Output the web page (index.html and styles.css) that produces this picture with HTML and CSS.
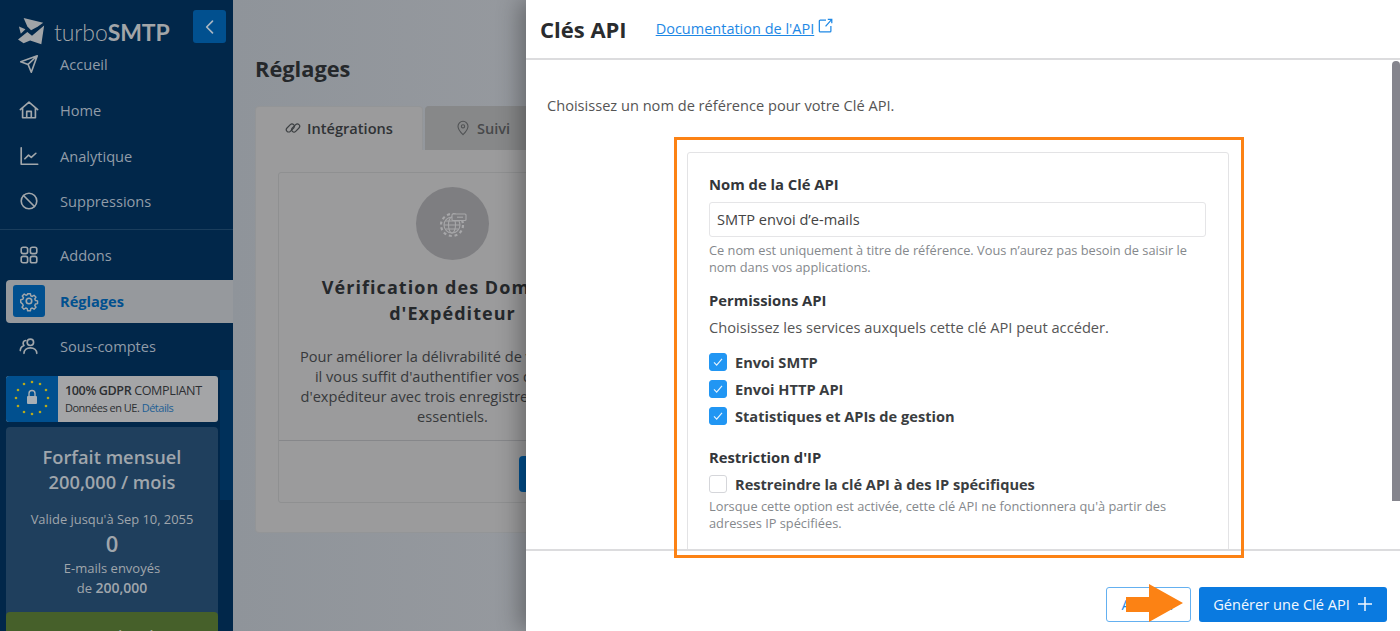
FILE: index.html
```html
<!DOCTYPE html>
<html lang="fr">
<head>
<meta charset="utf-8">
<title>Clés API</title>
<link rel="stylesheet" href="styles.css">
</head>
<body>
<div class="app">
  <aside class="sidebar">
    <div class="brand">
      <svg class="logo-mark" viewBox="0 0 30 30"><path d="M6 0l21 5-6 4.500-7 3.500-4-4z" fill="#a2a5a8"/><path d="M0 23l10-8 5 4 13-11-3 20-12-4-7 3z" fill="#a2a5a8"/><path d="M1 9l7 3-5 5z" fill="#a2a5a8"/></svg>
      <span class="logo-text">turbo<b>SMTP</b></span>
      <button class="collapse"><svg viewBox="0 0 24 24" width="20" height="20"><path d="M15 5l-7 7 7 7" fill="none" stroke="#a9b6c2" stroke-width="2" stroke-linecap="round" stroke-linejoin="round"/></svg></button>
    </div>
    <nav class="nav">
      <a class="nav-item first"><svg class="ico" viewBox="0 0 24 24"><path d="M3 9.500L21 3l-6.500 18-3.500-8.500L3 9.500zM11 12.500L21 3"/></svg>Accueil</a>
      <a class="nav-item"><svg class="ico" viewBox="0 0 24 24"><path d="M2.500 11.500L12 3.500l9.500 8M5 10v10.500h14V10M9.500 20.500v-7h5v7"/></svg>Home</a>
      <a class="nav-item"><svg class="ico" viewBox="0 0 24 24"><path d="M3.500 3v18h18M7.500 15l4-4 3 2.500 5-4.500"/></svg>Analytique</a>
      <a class="nav-item"><svg class="ico" viewBox="0 0 24 24"><circle cx="12" cy="12" r="8.500"/><path d="M6 6l12 12"/></svg>Suppressions</a>
      <div class="nav-divider"></div>
      <a class="nav-item"><svg class="ico" viewBox="0 0 24 24"><rect x="3.500" y="3.500" width="7" height="7" rx="2"/><rect x="13.500" y="3.500" width="7" height="7" rx="2"/><rect x="3.500" y="13.500" width="7" height="7" rx="2"/><rect x="13.500" y="13.500" width="7" height="7" rx="2"/></svg>Addons</a>
      <a class="nav-item active"><span class="tile"><svg class="ico" viewBox="0 0 24 24"><circle cx="12" cy="12" r="3"/><path d="M10.300 3h3.400l.5 2.600 1.800.8 2.200-1.500 2.400 2.400-1.500 2.200.8 1.800 2.600.5v3.400l-2.600.5-.8 1.800 1.500 2.200-2.400 2.400-2.200-1.500-1.800.8-.5 2.600h-3.400l-.5-2.600-1.800-.8-2.200 1.500-2.400-2.400 1.500-2.200-.8-1.800L1.800 13.700v-3.400l2.600-.5.800-1.800-1.500-2.200 2.400-2.400 2.200 1.500 1.800-.8z" transform="translate(1.400 1.400) scale(.885)"/></svg></span>Réglages</a>
      <a class="nav-item"><svg class="ico" viewBox="0 0 24 24"><circle cx="13.500" cy="8" r="3.500"/><path d="M6.500 20c0-3.500 3-6 7-6s7 2.500 7 6M8.500 6C6 6 4.500 9 6.500 11.500 4 12.500 2.500 14.500 2.500 17"/></svg>Sous-comptes</a>
    </nav>
    <div class="gdpr">
      <div class="gdpr-flag">
        <svg viewBox="0 0 52 46" width="52" height="46">
          <g fill="#b7a91c"><circle cx="26" cy="6" r="1.300"/><circle cx="34" cy="8" r="1.300"/><circle cx="40" cy="14" r="1.300"/><circle cx="42" cy="22" r="1.300"/><circle cx="40" cy="30" r="1.300"/><circle cx="34" cy="36" r="1.300"/><circle cx="26" cy="38" r="1.300"/><circle cx="18" cy="36" r="1.300"/><circle cx="12" cy="30" r="1.300"/><circle cx="10" cy="22" r="1.300"/><circle cx="12" cy="14" r="1.300"/><circle cx="18" cy="8" r="1.300"/></g>
          <rect x="21" y="20" width="10" height="8" rx="1" fill="#a9b0b6"/><path d="M23 20v-2.500a3 3 0 0 1 6 0V20" fill="none" stroke="#a9b0b6" stroke-width="1.400"/>
        </svg>
      </div>
      <div class="gdpr-text">
        <div class="gdpr-title"><strong>100% GDPR</strong> COMPLIANT</div>
        <div class="gdpr-sub">Données en UE. <span>Détails</span></div>
      </div>
    </div>
    <section class="plan">
      <div class="plan-name">Forfait mensuel</div>
      <div class="plan-name">200,000 / mois</div>
      <div class="plan-valid">Valide jusqu'à Sep 10, 2055</div>
      <div class="plan-count">0</div>
      <div class="plan-line">E-mails envoyés</div>
      <div class="plan-line">de <b>200,000</b></div>
      <div class="plan-cta">Comparer les plans</div>
    </section>
    <div class="side-thumb"></div>
  </aside>

  <main class="main">
    <h1 class="page-title">Réglages</h1>
    <div class="tabs">
      <div class="tab active"><svg class="tab-ico" viewBox="0 0 24 24"><rect x="1" y="8.500" width="14" height="7" rx="3.500" transform="rotate(-45 8 12)"/><rect x="9" y="8.500" width="14" height="7" rx="3.500" transform="rotate(-45 16 12)"/></svg>Intégrations</div>
      <div class="tab"><svg class="tab-ico" viewBox="0 0 24 24"><path d="M12 22s7.500-7 7.500-12.500a7.500 7.500 0 0 0-15 0C4.500 15 12 22 12 22z"/><circle cx="12" cy="9.500" r="2.500"/></svg>Suivi</div>
    </div>
    <div class="panel">
      <div class="feature">
        <div class="feature-body">
          <div class="feature-circle"><svg viewBox="0 0 32 32" width="32" height="32" fill="none" stroke="#a7a7a9" stroke-width="1.100"><circle cx="15" cy="17" r="11" stroke-width="2.200" stroke-dasharray="3 2.800"/><circle cx="15" cy="17" r="8"/><ellipse cx="15" cy="17" rx="3.500" ry="8"/><path d="M7 17h16M8.500 13h13M8.500 21h13"/><rect x="15" y="6" width="14" height="6.500" rx="1" fill="#7e7e81"/><path d="M20 9.200h6"/></svg></div>
          <h2 class="feature-title">Vérification des Domaines d'Expéditeur</h2>
          <p class="feature-text">Pour améliorer la délivrabilité de vos e-mails,<br>il vous suffit d'authentifier vos domaines<br>d'expéditeur avec trois enregistrements DNS<br>essentiels.</p>
        </div>
        <div class="feature-foot"><span class="feature-btn"></span></div>
      </div>
    </div>
  </main>
</div>

<div class="drawer">
  <header class="drawer-head">
    <h2 class="drawer-title">Clés API</h2>
    <a class="doc-link">Documentation de l'API</a>
    <svg class="ext" viewBox="0 0 18 18"><path d="M9 2.500H2.500a1 1 0 0 0-1 1v11a1 1 0 0 0 1 1h11a1 1 0 0 0 1-1V9M8.500 9.500l7-8M11 1.500h4.500V6"/></svg>
  </header>
  <div class="drawer-body">
    <p class="intro">Choisissez un nom de référence pour votre Clé API.</p>
    <form class="form-card">
      <div class="label">Nom de la Clé API</div>
      <div class="input">SMTP envoi d’e-mails</div>
      <p class="hint first-hint">Ce nom est uniquement à titre de référence. Vous n’aurez pas besoin de saisir le nom dans vos applications.</p>
      <div class="label perm">Permissions API</div>
      <p class="sub">Choisissez les services auxquels cette clé API peut accéder.</p>
      <div class="check"><span class="box on"><svg viewBox="0 0 18 18"><path d="M4.500 9.500l3 3 6-7"/></svg></span>Envoi SMTP</div>
      <div class="check"><span class="box on"><svg viewBox="0 0 18 18"><path d="M4.500 9.500l3 3 6-7"/></svg></span>Envoi HTTP API</div>
      <div class="check"><span class="box on"><svg viewBox="0 0 18 18"><path d="M4.500 9.500l3 3 6-7"/></svg></span>Statistiques et APIs de gestion</div>
      <div class="label ip">Restriction d'IP</div>
      <div class="check"><span class="box"></span>Restreindre la clé API à des IP spécifiques</div>
      <p class="hint">Lorsque cette option est activée, cette clé API ne fonctionnera qu'à partir des adresses IP spécifiées.</p>
    </form>
    <div class="scroll-thumb"></div>
  </div>
  <footer class="drawer-foot">
    <button class="btn ghost">Annuler</button>
    <button class="btn primary">Générer une Clé API<svg viewBox="0 0 16 16" width="16" height="16"><path d="M8 1v14M1 8h14" stroke="#f2f8fe" stroke-width="1.500" fill="none"/></svg></button>
  </footer>
</div>

<div class="note-rect"></div>
<svg class="note-arrow" viewBox="0 0 57 38" width="57" height="38"><path d="M0 13h23V0l34 19-34 19V28H0z" fill="#fc8214"/></svg>
</body>
</html>
```
FILE: styles.css
```css
* { box-sizing: border-box; }
html, body { margin: 0; height: 100%; overflow: hidden; }
body { font-family: "Open Sans", "Noto Sans", sans-serif; color: #333; background: #96999e; }
h1, h2, p { margin: 0; }
button { font: inherit; }

.app { display: flex; height: 631px; }

.sidebar { width: 233px; flex: none; background: #01274a; position: relative; overflow: hidden; display: flex; flex-direction: column; }
.brand { height: 43px; margin-top: 10px; padding-left: 18px; display: flex; align-items: center; position: relative; flex: none; }
.logo-mark { width: 28px; height: 28px; flex: none; }
.logo-text { font-family: Lato, "Open Sans", sans-serif; font-weight: 300; font-size: 23px; color: #a2a5a8; margin-left: 8px; letter-spacing: -.1px; }
.logo-text b { font-weight: 700; }
.collapse { position: absolute; left: 193px; top: 0; width: 33px; height: 33px; border: 0; padding: 0; border-radius: 3px; background: #01508f; display: flex; align-items: center; justify-content: center; }

.nav { display: flex; flex-direction: column; }
.nav-item { height: 45.700px; display: flex; align-items: center; padding-left: 18px; gap: 20px; font-size: 14.600px; color: #919ca8; white-space: nowrap; }
.nav-item.first { margin-top: -11.600px; }
.ico { width: 22px; height: 22px; flex: none; fill: none; stroke: #a2a7ab; stroke-width: 1.800; stroke-linecap: round; stroke-linejoin: round; }
.nav-divider { height: 1px; background: #1a3d5c; margin: 4.600px 0 2px; }
.nav-item.active { height: 43px; margin: 3px 0 0 6px; padding: 0 0 1px 7px; gap: 15px; background: #96999d; border-radius: 4px 0 0 4px; color: #01508f; font-weight: 700; }
.tile { width: 32px; height: 32px; border-radius: 3px; background: #01508f; display: flex; align-items: center; justify-content: center; flex: none; }

.gdpr { width: 212px; height: 46px; margin: 7px 0 0 6px; display: flex; border-radius: 3px; overflow: hidden; background: #a4a5a7; flex: none; }
.gdpr-flag { width: 52px; background: #01508f; flex: none; }
.gdpr-text { padding: 6px 0 0 7px; color: #2c2f32; font-size: 12.600px; line-height: 17px; letter-spacing: -.4px; white-space: nowrap; }
.gdpr-title strong { font-weight: 600; }
.gdpr-sub { font-size: 11px; letter-spacing: -.5px; }
.gdpr-sub span { color: #1e5f95; }

.plan { width: 212px; height: 220px; margin: 5px 0 0 6px; background: #1f3f5d; border-radius: 4px 4px 0 0; color: #a0a6ac; text-align: center; padding-top: 17px; position: relative; flex: none; }
.plan-name { font-size: 18.300px; line-height: 25px; font-weight: 600; }
.plan-valid { font-size: 12.900px; line-height: 18px; margin-top: 16px; }
.plan-count { font-size: 22px; line-height: 29px; font-weight: 600; margin-top: 1px; }
.plan-line { font-size: 13px; line-height: 20px; }
.plan-line b { font-size: 14px; font-weight: 600; }
.plan-cta { position: absolute; left: 0; right: 0; top: 185px; height: 40px; background: #46602a; border-radius: 4px 4px 0 0; color: #a3aa9c; font-size: 14px; font-weight: 600; padding-top: 14px; }
.side-thumb { position: absolute; left: 220px; top: 370px; width: 13px; height: 130px; background: #00305a; }

.main { flex: 1; padding: 0 0 0 22px; background: linear-gradient(90deg, #8f949a, #979a9f 30%); min-width: 0; overflow: hidden; }
.page-title { font-size: 21.800px; line-height: 30px; font-weight: 700; color: #25282b; margin-top: 54px; }
.tabs { display: flex; margin-top: 22px; gap: 2px; }
.tab { height: 44px; padding-bottom: 2px; display: flex; align-items: center; justify-content: center; gap: 6px; font-size: 14.600px; font-weight: 600; color: #2f3235; background: #9b9b9c; border: 1px solid #939597; border-bottom: 0; border-radius: 4px 4px 0 0; width: 168px; flex: none; }
.tab + .tab { background: #878889; border-color: #878889; color: #47494b; width: 115px; }
.tab-ico { width: 16px; height: 16px; fill: none; stroke: #3d4043; stroke-width: 1.800; }
.tab + .tab .tab-ico { stroke: #505254; stroke-width: 1.600; }
.panel { width: 640px; height: 383px; background: #9b9b9c; border: 1px solid #939597; border-top: 0; border-radius: 0 0 4px 4px; padding: 22px 0 0 22px; }
.feature { width: 350px; height: 331px; border: 1px solid #8f9091; border-radius: 3px; display: flex; flex-direction: column; }
.feature-body { height: 268px; border-bottom: 1px solid #86878a; text-align: center; padding: 14px 1px 0 0; flex: none; }
.feature-circle { width: 73px; height: 73px; border-radius: 50%; background: #7e7e81; margin: 0 auto; display: flex; align-items: center; justify-content: center; }
.feature-title { font-size: 18px; line-height: 26px; font-weight: 700; letter-spacing: 1.050px; color: #25282b; margin-top: 14px; padding: 0 22px; }
.feature-text { font-size: 14.600px; line-height: 20px; color: #37393b; margin-top: 20px; white-space: nowrap; }
.feature-foot { padding: 15px 0 0 240px; }
.feature-btn { display: block; width: 93px; height: 36px; border-radius: 4px; background: #01508f; }

.drawer { position: absolute; left: 526px; top: 0; width: 874px; height: 631px; background: #fff; box-shadow: -6px 0 22px rgba(0,0,0,.32); display: flex; flex-direction: column; }
.drawer-head { height: 60px; border-bottom: 2px solid #dcdcde; display: flex; align-items: center; padding-left: 14px; flex: none; }
.drawer-title { font-size: 22px; font-weight: 700; color: #2a2c2e; }
.doc-link { font-size: 14.500px; color: #1e88e5; text-decoration: underline; margin: 0 0 2px 29px; }
.ext { width: 16px; height: 16px; margin: -6px 0 0 4px; fill: none; stroke: #1e88e5; stroke-width: 1.400; }
.drawer-body { flex: 1; position: relative; overflow: hidden; padding: 35px 0 0 21px; min-height: 0; }
.intro { font-size: 14.600px; line-height: 20px; color: #555; }
.form-card { width: 542px; margin: 37px 0 0 140px; padding: 19px 22px 0 21px; border: 1px solid #e3e3e5; border-radius: 3px; background: #fff; height: 420px; }
.label { font-size: 14.800px; line-height: 24px; font-weight: 700; color: #33363a; }
.input { height: 35px; margin-top: 6px; padding: 0 7px 1px; border: 1px solid #e5e5e7; border-radius: 3px; display: flex; align-items: center; font-size: 14.600px; color: #444; }
.hint { font-size: 12.800px; line-height: 17px; color: #85888c; }
.first-hint { margin-top: 5px; }
.perm { margin-top: 12px; }
.sub { font-size: 14.660px; line-height: 20px; color: #555; margin-top: 5px; }
.check { display: flex; align-items: center; gap: 8px; height: 27px; font-size: 14.600px; font-weight: 700; color: #3a3d40; }
.sub + .check { margin-top: 11px; }
.box { width: 18px; height: 18px; border-radius: 3px; border: 1px solid #d5d6da; flex: none; background: #fff; }
.box.on { background: #2196f3; border-color: #2196f3; }
.box svg { display: block; width: 16px; height: 16px; fill: none; stroke: #e8f4fe; stroke-width: 1.300; }
.ip { margin-top: 16px; }
.ip + .check { margin-top: 1px; }
.check + .hint { margin-top: 1px; }
.scroll-thumb { position: absolute; right: 0; top: 1px; width: 8px; height: 440px; background: #85858d; border-radius: 4px 4px 0 0; }
.drawer-foot { height: 82px; border-top: 2px solid #dcdcde; display: flex; justify-content: flex-end; gap: 8px; padding: 36px 13px 0 0; flex: none; }
.btn { height: 35px; border-radius: 3px; font-size: 14.600px; padding: 0 0 1px; }
.ghost { width: 85px; background: #fff; border: 1px solid #64b0f0; color: #1e88e5; }
.primary { width: 188px; background: #0a7ae0; border: 0; color: #f2f8fe; display: flex; align-items: center; justify-content: center; gap: 7px; }

.note-rect { position: absolute; left: 674px; top: 137px; width: 570px; height: 421px; border: 3px solid #fc8214; pointer-events: none; }
.note-arrow { position: absolute; left: 1126px; top: 584px; }
```
